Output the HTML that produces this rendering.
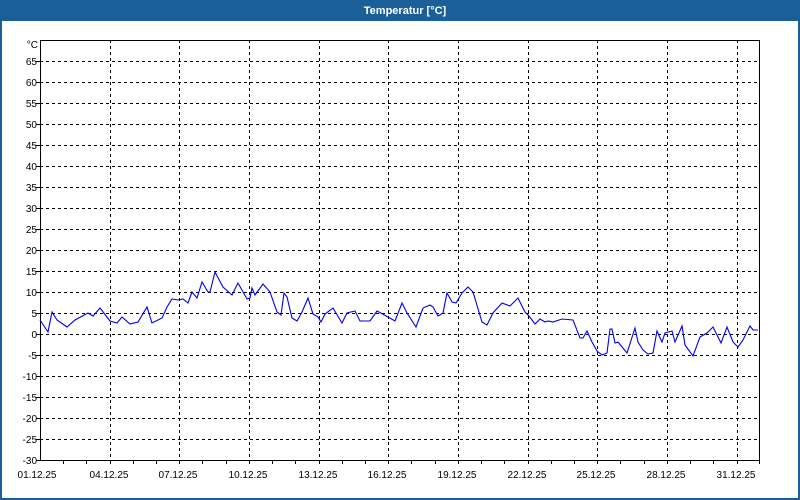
<!DOCTYPE html>
<html><head><meta charset="utf-8"><style>
html,body{margin:0;padding:0;width:800px;height:500px;overflow:hidden;background:#fff}
</style></head><body>
<svg width="800" height="500" xmlns="http://www.w3.org/2000/svg" font-family="Liberation Sans, DejaVu Sans, sans-serif">
<rect x="0" y="0" width="800" height="500" fill="#1b5f98"/>
<rect x="2" y="21" width="796" height="477" fill="#fff"/>
<text x="405" y="14" fill="#fff" font-size="11" font-weight="bold" text-anchor="middle">Temperatur [°C]</text>
<g stroke="#000" stroke-width="1" stroke-dasharray="3,3" shape-rendering="crispEdges">
<line x1="40" y1="61.5" x2="760" y2="61.5"/><line x1="40" y1="82.5" x2="760" y2="82.5"/><line x1="40" y1="103.5" x2="760" y2="103.5"/><line x1="40" y1="124.5" x2="760" y2="124.5"/><line x1="40" y1="145.5" x2="760" y2="145.5"/><line x1="40" y1="166.5" x2="760" y2="166.5"/><line x1="40" y1="187.5" x2="760" y2="187.5"/><line x1="40" y1="208.5" x2="760" y2="208.5"/><line x1="40" y1="229.5" x2="760" y2="229.5"/><line x1="40" y1="250.5" x2="760" y2="250.5"/><line x1="40" y1="271.5" x2="760" y2="271.5"/><line x1="40" y1="292.5" x2="760" y2="292.5"/><line x1="40" y1="313.5" x2="760" y2="313.5"/><line x1="40" y1="334.5" x2="760" y2="334.5"/><line x1="40" y1="355.5" x2="760" y2="355.5"/><line x1="40" y1="376.5" x2="760" y2="376.5"/><line x1="40" y1="397.5" x2="760" y2="397.5"/><line x1="40" y1="418.5" x2="760" y2="418.5"/><line x1="40" y1="439.5" x2="760" y2="439.5"/>
<line x1="110.5" y1="40" x2="110.5" y2="460"/><line x1="179.5" y1="40" x2="179.5" y2="460"/><line x1="249.5" y1="40" x2="249.5" y2="460"/><line x1="319.5" y1="40" x2="319.5" y2="460"/><line x1="388.5" y1="40" x2="388.5" y2="460"/><line x1="458.5" y1="40" x2="458.5" y2="460"/><line x1="528.5" y1="40" x2="528.5" y2="460"/><line x1="597.5" y1="40" x2="597.5" y2="460"/><line x1="667.5" y1="40" x2="667.5" y2="460"/><line x1="737.5" y1="40" x2="737.5" y2="460"/>
</g>
<g stroke="#000" stroke-width="1" shape-rendering="crispEdges">
<rect x="40.5" y="40.5" width="719" height="420" fill="none"/>
<path d="M63.5 460v4M86.5 460v4M110.5 460v4M133.5 460v4M156.5 460v4M179.5 460v4M202.5 460v4M226.5 460v4M249.5 460v4M272.5 460v4M295.5 460v4M319.5 460v4M342.5 460v4M365.5 460v4M388.5 460v4M411.5 460v4M435.5 460v4M458.5 460v4M481.5 460v4M504.5 460v4M528.5 460v4M551.5 460v4M574.5 460v4M597.5 460v4M620.5 460v4M644.5 460v4M667.5 460v4M690.5 460v4M713.5 460v4M737.5 460v4M759.5 460v4M36 61.5h4M36 82.5h4M36 103.5h4M36 124.5h4M36 145.5h4M36 166.5h4M36 187.5h4M36 208.5h4M36 229.5h4M36 250.5h4M36 271.5h4M36 292.5h4M36 313.5h4M36 334.5h4M36 355.5h4M36 376.5h4M36 397.5h4M36 418.5h4M36 439.5h4M36 460.5h4"/>
</g>
<g font-size="10" fill="#000" text-anchor="end">
<text x="38" y="48">°C</text>
<text x="37" y="65">65</text><text x="37" y="86">60</text><text x="37" y="107">55</text><text x="37" y="128">50</text><text x="37" y="149">45</text><text x="37" y="170">40</text><text x="37" y="191">35</text><text x="37" y="212">30</text><text x="37" y="233">25</text><text x="37" y="254">20</text><text x="37" y="275">15</text><text x="37" y="296">10</text><text x="37" y="317">5</text><text x="37" y="338">0</text><text x="37" y="359">-5</text><text x="37" y="380">-10</text><text x="37" y="401">-15</text><text x="37" y="422">-20</text><text x="37" y="443">-25</text><text x="37" y="464">-30</text>
</g>
<g font-size="10" fill="#000" text-anchor="middle">
<text x="37" y="478">01.12.25</text><text x="109" y="478">04.12.25</text><text x="178" y="478">07.12.25</text><text x="248" y="478">10.12.25</text><text x="318" y="478">13.12.25</text><text x="387" y="478">16.12.25</text><text x="457" y="478">19.12.25</text><text x="527" y="478">22.12.25</text><text x="596" y="478">25.12.25</text><text x="666" y="478">28.12.25</text><text x="736" y="478">31.12.25</text>
</g>
<polyline fill="none" stroke="#0000ee" stroke-width="1.1" points="40,320 48,332 52,312 57,320 67,327 75,320 88,313 93,316 100,308 110,321 117,323 122,317 130,324 138,322 147,307 152,323 162,318 167,307 172,299 178,300 183,299 188,303 192,292 197,298 202,282 208,292 210,292 215,272 223,287 232,295 238,283 247,299 250,298 252,288 255,295 263,284 270,292 277,312 281,315 284,293 287,297 292,318 297,321 302,312 308,298 313,314 318,317 321,322 325,314 333,308 342,323 347,313 355,311 360,321 370,321 377,311 388,317 395,321 402,303 407,313 416,327 423,308 430,305 433,307 438,316 443,313 447,293 452,302 456,303 462,293 468,287 473,292 482,322 487,325 493,313 502,303 510,306 518,298 525,312 529,316 535,324 540,319 545,322 548,321 553,322 562,319 573,320 580,338 583,338 587,331 592,342 597,351 602,355 607,353 610,329 612,329 615,343 618,342 627,353 635,328 638,342 643,350 648,354 653,353 657,331 662,342 665,333 672,331 675,342 682,326 685,345 693,356 700,337 707,333 713,327 721,343 727,327 733,342 738,347 743,340 750,326 753,330 758,330"/>
</svg>
</body></html>
